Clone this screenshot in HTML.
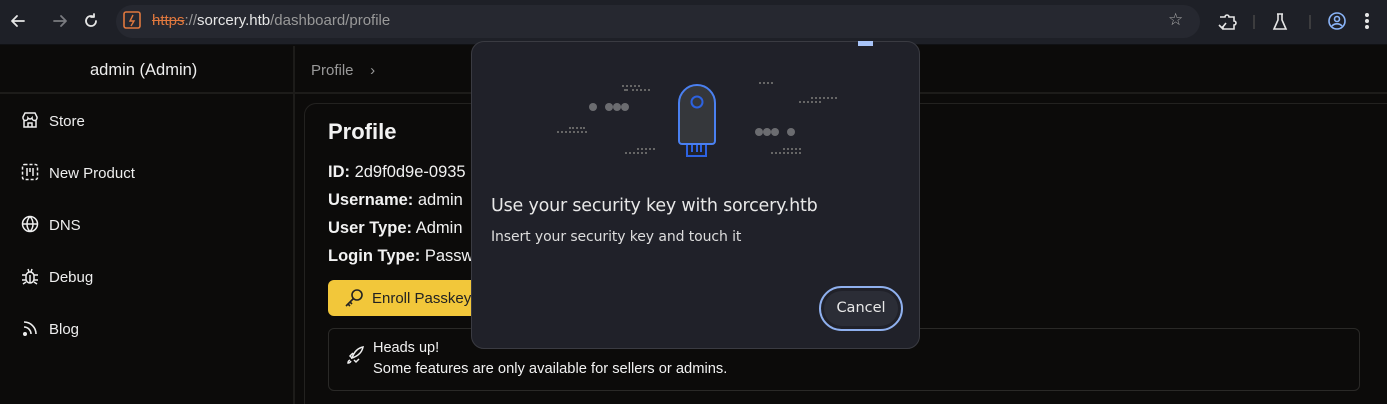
<!DOCTYPE html>
<html><head><meta charset="utf-8"><style>
*{box-sizing:border-box;margin:0;padding:0}
html,body{width:1387px;height:404px;overflow:hidden}
body{background:#0c0b0a;font-family:"Liberation Sans",sans-serif;color:#f2f2f2;position:relative}
.top{position:absolute;left:0;top:0;width:1387px;height:45px;background:#1e2027;border-bottom:1px solid #101114}
.url{position:absolute;left:116px;top:5px;width:1084px;height:33px;border-radius:17px;background:#262830}
.a{position:absolute}
.hdr{position:absolute;left:0;top:46px;width:1387px;height:48px;border-bottom:2px solid #1d1c1a}
.side{position:absolute;left:293px;top:46px;width:2px;height:358px;background:#1d1c1a}
.nav{position:absolute;left:49px;font-size:15px;color:#eee}
.ic{position:absolute;left:21px}
.card{position:absolute;left:304px;top:103px;width:1083px;height:301px;border:1px solid #232220;border-right:none;border-bottom:none;border-radius:12px 0 0 0}
.b{font-weight:bold}
.row{position:absolute;left:328px;font-size:16.5px}
.dlg{position:absolute;left:471px;top:41px;width:449px;height:308px;background:#202129;border:1px solid #3a3b42;border-radius:13px}
.dot{position:absolute;height:2px;border-top:2px dotted #666}
.c{position:absolute;width:8px;height:8px;border-radius:50%;background:#6b6c70}
</style></head><body>
<div class="top">
<svg class="a" style="left:8px;top:12px" width="100" height="20" viewBox="0 0 100 20" fill="none" stroke-width="1.8" stroke-linecap="round" stroke-linejoin="round">
<path d="M4 9h12M4 9l5-5M4 9l5 5" stroke="#e6e6e6"/>
<path d="M46 9h12M58 9l-5-5M58 9l-5 5" stroke="#7a7b80"/>
<path d="M86 5a5 5 0 1 0 2 4M86 2v3h-3" stroke="#e6e6e6"/>
</svg>
<div class="url"></div>
<svg class="a" style="left:123px;top:11px" width="18" height="18"><rect x="1" y="1" width="16" height="16" rx="2" fill="none" stroke="#e0783e" stroke-width="1.6"/><path d="M10 4l-3 6h4l-3 5" fill="none" stroke="#e0783e" stroke-width="1.4"/></svg>
<div class="a" style="left:152px;top:12px;font-size:15px;color:#999"><span style="color:#e0783e;text-decoration:line-through">https</span>://<span style="color:#e6e6e6">sorcery.htb</span>/dashboard/profile</div>
<div class="a" style="left:1168px;top:10px;color:#aaa;font-size:17px">☆</div>
<svg class="a" style="left:1214px;top:11px" width="170" height="22" fill="none" stroke="#e6e6e6" stroke-width="1.6">
<path d="M6 6h5a2 2 0 0 1 4 0h5v4a2 2 0 0 1 0 4v4H9v-3M5 14l3 3 4-5"/>
<path d="M40 4v14" stroke="#444"/><path d="M96 4v14" stroke="#444"/>
<path d="M63 3h6M64 3v6l-4 9h12l-4-9V3"/>
<circle cx="123" cy="10" r="8" stroke="#8ab4f8"/><circle cx="123" cy="8" r="2.5" stroke="#8ab4f8"/><path d="M118 15a6 5 0 0 1 10 0" stroke="#8ab4f8"/>
<circle cx="153" cy="4" r="1.2" fill="#e6e6e6"/><circle cx="153" cy="10" r="1.2" fill="#e6e6e6"/><circle cx="153" cy="16" r="1.2" fill="#e6e6e6"/>
</svg>
</div>
<div class="hdr"></div><div class="side"></div>
<div class="a" style="left:90px;top:61px;font-size:16.5px;color:#eee">admin (Admin)</div>
<div class="a" style="left:311px;top:62px;font-size:15px;color:#999">Profile &nbsp;&nbsp;&nbsp;›</div>
<svg class="ic" style="top:111px" width="18" height="18" fill="none" stroke="#eee" stroke-width="1.5"><path d="M2 6l2-4h10l2 4v1a2.5 2.5 0 0 1-5 0 2.5 2.5 0 0 1-4 0 2.5 2.5 0 0 1-5 0zM3 9v7h12V9M7 16v-4h4v4"/></svg>
<div class="nav" style="top:113px">Store</div>
<svg class="ic" style="top:163px" width="18" height="18" fill="none" stroke="#eee" stroke-width="1.5"><rect x="1.5" y="1.5" width="15" height="15" rx="2" stroke-dasharray="3 2"/><path d="M6 5v8M9 5v4M12 5v8"/></svg>
<div class="nav" style="top:165px">New Product</div>
<svg class="ic" style="top:215px" width="18" height="18" fill="none" stroke="#eee" stroke-width="1.5"><circle cx="9" cy="9" r="7.5"/><path d="M1.5 9h15M9 1.5c-4 4-4 11 0 15M9 1.5c4 4 4 11 0 15"/></svg>
<div class="nav" style="top:217px">DNS</div>
<svg class="ic" style="top:267px" width="18" height="18" fill="none" stroke="#eee" stroke-width="1.5"><rect x="5" y="5" width="8" height="11" rx="4"/><path d="M7 2l1 3M11 2l-1 3M9 8v8M1 8h4M13 8h4M1 13h4M13 13h4M2 17l3-2M16 17l-3-2"/></svg>
<div class="nav" style="top:269px">Debug</div>
<svg class="ic" style="top:319px" width="18" height="18" fill="none" stroke="#eee" stroke-width="1.6"><path d="M3 3a12 12 0 0 1 12 12M3 8a7 7 0 0 1 7 7"/><circle cx="4" cy="15" r="1.2" fill="#eee"/></svg>
<div class="nav" style="top:321px">Blog</div>
<div class="card"></div>
<div class="a b" style="left:328px;top:119px;font-size:22px">Profile</div>
<div class="row" style="top:163px"><span class="b">ID:</span> 2d9f0d9e-0935</div>
<div class="row" style="top:191px"><span class="b">Username:</span> admin</div>
<div class="row" style="top:219px"><span class="b">User Type:</span> Admin</div>
<div class="row" style="top:247px"><span class="b">Login Type:</span> Passw</div>
<div class="a" style="left:328px;top:280px;width:160px;height:36px;background:#f2c73a;border-radius:6px"></div>
<svg class="a" style="left:344px;top:288px" width="20" height="20" fill="none" stroke="#222" stroke-width="1.6"><circle cx="13" cy="7" r="5"/><path d="M9.5 10.5L2 18M4 16l2 2M6 14l2 2"/></svg>
<div class="a" style="left:372px;top:290px;font-size:15px;color:#222">Enroll Passkey</div>
<div class="a" style="left:328px;top:328px;width:1032px;height:63px;border:1px solid #2a2927;border-radius:6px"></div>
<svg class="a" style="left:346px;top:346px" width="18" height="18" fill="none" stroke="#eee" stroke-width="1.5"><path d="M6 12c2-6 6-10 11-11-1 5-5 9-11 11zM6 12l-2-2 3-3M8 14l2 2 3-3M4 14c-2 1-2 3-2 3s2 0 3-2"/></svg>
<div class="a" style="left:373px;top:340px;font-size:14.5px">Heads up!</div>
<div class="a" style="left:373px;top:361px;font-size:14.7px">Some features are only available for sellers or admins.</div>
<div class="dlg">
<div class="a" style="left:386px;top:-1px;width:15px;height:5px;background:#a8c4f8"></div>
<div class="dot" style="left:152px;top:47px;width:4px"></div><div class="dot" style="left:160px;top:47px;width:18px"></div><div class="dot" style="left:150px;top:43px;width:18px"></div>
<div class="dot" style="left:85px;top:89px;width:30px"></div><div class="dot" style="left:97px;top:85px;width:16px"></div>
<div class="dot" style="left:153px;top:110px;width:22px"></div><div class="dot" style="left:165px;top:106px;width:18px"></div>
<div class="dot" style="left:287px;top:40px;width:14px"></div>
<div class="dot" style="left:327px;top:59px;width:22px"></div><div class="dot" style="left:339px;top:55px;width:26px"></div>
<div class="dot" style="left:299px;top:110px;width:30px"></div><div class="dot" style="left:311px;top:106px;width:18px"></div>
<div class="c" style="left:117px;top:61px"></div><div class="c" style="left:133px;top:61px"></div><div class="c" style="left:141px;top:61px"></div><div class="c" style="left:149px;top:61px"></div>
<div class="c" style="left:283px;top:86px"></div><div class="c" style="left:291px;top:86px"></div><div class="c" style="left:299px;top:86px"></div><div class="c" style="left:315px;top:86px"></div>
<svg class="a" style="left:205px;top:41px" width="40" height="74" fill="none"><path d="M2 20a18 18 0 0 1 36 0v38a3 3 0 0 1-3 3H5a3 3 0 0 1-3-3z" fill="#35373b" stroke="#4a80f0" stroke-width="2"/><circle cx="20" cy="19" r="5.5" stroke="#2d62e0" stroke-width="2"/><path d="M10 62v11h19V62M15 62v7M20 62v7M24 62v7" stroke="#2d62e0" stroke-width="2"/></svg>
<div class="a" style="left:19px;top:154px;font-size:17.5px;color:#e8e8e8;font-family:'DejaVu Sans',sans-serif;letter-spacing:-0.2px">Use your security key with sorcery.htb</div>
<div class="a" style="left:19px;top:187px;font-size:14px;color:#ddd;font-family:'DejaVu Sans',sans-serif;letter-spacing:-0.1px">Insert your security key and touch it</div>
<div class="a" style="left:347px;top:244px;width:84px;height:45px;border:2px solid #8fb0ee;border-radius:23px;padding:3px"><div style="width:100%;height:100%;background:#2b2d36;border-radius:19px;font-family:'DejaVu Sans',sans-serif;font-size:14.5px;color:#e8e8e8;text-align:center;line-height:35px">Cancel</div></div>
</div>
</body></html>
